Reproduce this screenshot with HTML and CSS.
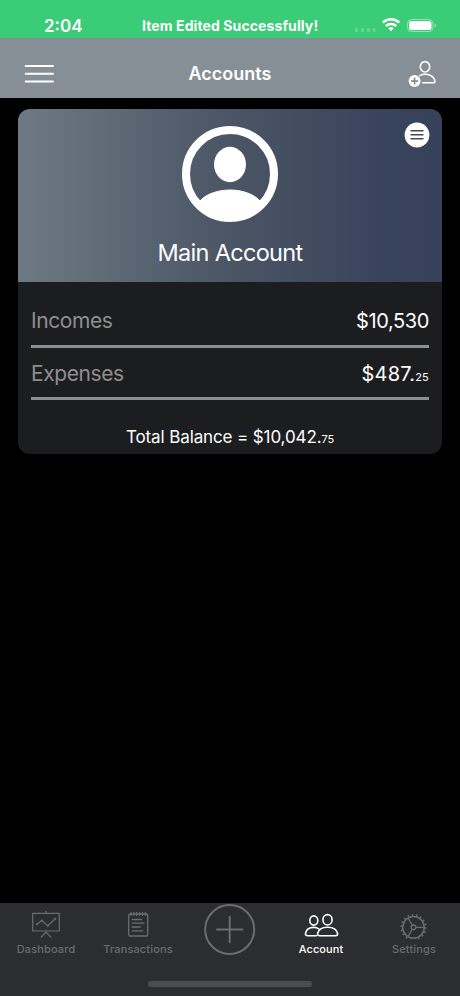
FILE: index.html
```html
<!DOCTYPE html>
<html lang="en">
<head>
  <meta charset="UTF-8">
  <meta name="viewport" content="width=device-width, initial-scale=1">
  <title>Accounts</title>
  <link rel="stylesheet" href="styles.css">
</head>
<body>

  <div class="status-bar">
    <span class="time">2:04</span>
    <span class="message">Item Edited Successfully!</span>
    <svg class="status-icons" width="84" height="18" viewBox="0 0 84 18">
      <g fill="#fff" opacity=".22">
        <rect x="1" y="12" width="3" height="4" rx="1"/>
        <rect x="7" y="12" width="3" height="4" rx="1"/>
        <rect x="13" y="12" width="3" height="4" rx="1"/>
        <rect x="18.500" y="12" width="3" height="4" rx="1"/>
      </g>
      <g fill="none" stroke="#fff" stroke-width="2.500">
        <path d="M28.800 6.600a12 12 0 0 1 16.400 0"/>
        <path d="M31.800 10a7.500 7.500 0 0 1 10.400 0"/>
      </g>
      <path d="M34.200 12.200a4.200 4.200 0 0 1 5.600 0L37 15.200z" fill="#fff"/>
      <rect x="53.500" y="3.500" width="25.500" height="12" rx="4" fill="none" stroke="#fff" opacity=".45"/>
      <rect x="55" y="5" width="22.500" height="9" rx="2.500" fill="#fff"/>
      <path d="M80.500 7.500c1.800.8 1.800 3.200 0 4z" fill="#fff" opacity=".5"/>
    </svg>
  </div>

  <header class="navbar">
    <svg class="menu" width="30" height="20" viewBox="0 0 30 20">
      <path d="M1.700 2h27.300M1.700 9.700h27.300M1.700 17.400h27.300" stroke="#fff" stroke-width="2" stroke-linecap="round"/>
    </svg>
    <h1>Accounts</h1>
    <svg class="add-user" width="28" height="28" viewBox="0 0 28 28">
      <g fill="none" stroke="#fff" stroke-width="1.600">
        <ellipse cx="17" cy="7.800" rx="4.700" ry="5.200"/>
        <path d="M11.800 16.600c3.300-2 8.500-1.900 11.600.3 2.200 1.500 3.300 3.300 3.500 5.400q.1 1.500-1.400 1.500H14.600" stroke-linecap="round" stroke-linejoin="round"/>
      </g>
      <circle cx="6.600" cy="22" r="6" fill="#fff"/>
      <path d="M6.600 18.400v7.200M3 22h7.200" stroke="#7b838b" stroke-width="1.500"/>
    </svg>
  </header>

  <main>
    <section class="card">
      <div class="card-top">
        <svg class="avatar" width="96" height="96" viewBox="0 0 96 96">
          <circle cx="48" cy="48" r="44" fill="none" stroke="#fff" stroke-width="8"/>
          <ellipse cx="48" cy="38.500" rx="16" ry="17.700" fill="#fff"/>
          <path d="M18 75C24 68 36 64 48 64S72 68 78 75A43 43 0 0 1 18 75z" fill="#fff" stroke="#fff"/>
          <path d="M17 76A42 42 0 0 0 79 76z" fill="#fff"/>
        </svg>
        <h2>Main Account</h2>
        <svg class="card-menu" width="26" height="26" viewBox="0 0 26 26">
          <circle cx="13" cy="13" r="12.400" fill="#fff"/>
          <path d="M6.500 8.800h13M6.500 12.800h13M6.500 16.800h13" stroke="#4a4a4a" stroke-width="1.500"/>
        </svg>
      </div>
      <div class="card-body">
        <div class="row">
          <span class="label">Incomes</span>
          <span class="amount">$10,530</span>
        </div>
        <div class="row">
          <span class="label">Expenses</span>
          <span class="amount spaced">$487.<small>25</small></span>
        </div>
        <p class="total">Total Balance = $10,042.<small>75</small></p>
      </div>
    </section>
  </main>

  <nav class="tabs">
    <a class="tab">
      <svg width="30" height="30" viewBox="0 0 30 30">
        <g fill="none" stroke="currentColor" stroke-width="1.200">
          <path d="M1.700 4.300h26.600v17.700H1.700zM15 2v2.300M15 22v2.500M9.700 28.500l5.300-5.500 5.300 5.500"/>
          <path d="M5.500 15.500l5.300-4 6 5.300 7.700-7.300"/>
        </g>
        <g fill="currentColor">
          <circle cx="5.800" cy="15.300" r="1"/><circle cx="10.800" cy="11.500" r="1"/>
          <circle cx="16.800" cy="16.700" r="1"/><circle cx="24.300" cy="9.700" r="1"/>
        </g>
      </svg>
      <span>Dashboard</span>
    </a>
    <a class="tab">
      <svg width="30" height="30" viewBox="0 0 30 30">
        <g fill="none" stroke="currentColor" stroke-width="1.300">
          <rect x="5.700" y="5" width="19" height="22" rx="1.200"/>
          <path d="M9.300 10.500h9M9.300 14.200h11.500M9.300 18h8M9.300 21.800h10.500" stroke-linecap="round"/>
          <path d="M7.900 3v4M10.800 3v4M13.700 3v4M16.600 3v4M19.500 3v4M22.400 3v4" stroke-width="1.100"/>
        </g>
      </svg>
      <span>Transactions</span>
    </a>
    <a class="tab add">
      <svg width="52" height="52" viewBox="0 0 52 52">
        <g fill="none" stroke="currentColor" stroke-width="2">
          <circle cx="25.700" cy="25.500" r="24.500"/>
          <path d="M25.700 12v27M12.200 25.500h27"/>
        </g>
      </svg>
    </a>
    <a class="tab active">
      <svg width="36" height="30" viewBox="0 0 36 30">
        <g fill="none" stroke="currentColor" stroke-width="1.600" stroke-linecap="round" stroke-linejoin="round">
          <ellipse cx="9.800" cy="11.500" rx="4" ry="4.600"/>
          <ellipse cx="23.500" cy="10.800" rx="4.600" ry="5.200"/>
          <path d="M12.500 26.700H3.800c-1.700 0-2.600-.6-2.300-2.200.7-3.900 4-6.100 8.300-6.100 2.200 0 3.800.5 5.100 1.600"/>
          <path d="M15.700 26.700h15.800c1.600 0 2.400-.8 2.100-2.200-.9-4-5-6.200-10-6.200s-9.200 2.200-10 6.200c-.3 1.400.5 2.200 2.100 2.200z"/>
        </g>
      </svg>
      <span>Account</span>
    </a>
    <a class="tab">
      <svg width="30" height="30" viewBox="0 0 30 30">
        <g fill="none" stroke="currentColor" stroke-width="1.300">
          <circle cx="14.500" cy="18.300" r="10.800" stroke-width="1.500"/>
          <circle cx="14.500" cy="18.300" r="12.200" stroke-width="2" stroke-dasharray="1.500 2.758"/>
          <circle cx="14.500" cy="18.300" r="2.300"/>
          <path d="M16.800 18.300h8.500M13.300 16.300L9.100 9M13.300 20.300l-4.200 7.300"/>
        </g>
      </svg>
      <span>Settings</span>
    </a>
    <div class="home-indicator"></div>
  </nav>

</body>
</html>
```

FILE: styles.css
```css
* {
  box-sizing: border-box;
}

body {
  margin: 0;
  height: 996px;
  display: flex;
  flex-direction: column;
  background: #000;
  color: #fff;
  font-family: Inter, "Liberation Sans", sans-serif;
  overflow: hidden;
}

h1, h2, p {
  margin: 0;
}

svg {
  display: block;
  flex-shrink: 0;
}

.status-bar {
  height: 38px;
  padding: 14px 22.5px 0 44px;
  display: grid;
  grid-template-columns: 98px 1fr 84px;
  background: #3acc76;
}

.time {
  font-size: 17px;
  font-weight: 600;
  line-height: 24px;
}

.message {
  font-size: 14px;
  font-weight: 700;
  line-height: 24px;
  letter-spacing: .1px;
  white-space: nowrap;
}

.status-icons {
  margin-top: 2px;
}

.navbar {
  height: 60px;
  padding: 11px 24px 0;
  display: grid;
  grid-template-columns: 30px 1fr 30px;
  align-items: center;
  background: #868e96;
}

.navbar h1 {
  font-size: 18px;
  font-weight: 600;
  text-align: center;
}

.add-user {
  justify-self: end;
  margin-bottom: 1px;
}

main {
  flex: 1;
  padding: 11px 18px;
}

.card {
  height: 344.5px;
  border-radius: 12px;
  background: #1c1d1f;
  overflow: hidden;
}

.card-top {
  position: relative;
  height: 173px;
  padding-top: 17px;
  display: flex;
  flex-direction: column;
  align-items: center;
  background: linear-gradient(90deg, #6d7a84 0%, #4b5565 50%, #38435c 88%, #374159 100%);
}

.card-top h2 {
  margin-top: 16px;
  font-size: 23.5px;
  font-weight: 400;
  line-height: 30px;
  letter-spacing: -.7px;
}

.card-menu {
  position: absolute;
  top: 12.5px;
  right: 12.5px;
}

.card-body {
  padding: 10px 13px 0;
}

.row {
  height: 52px;
  padding-top: 11px;
  display: flex;
  justify-content: space-between;
  border-bottom: 3px solid #8e8e90;
  line-height: 30px;
}

.row:first-child {
  height: 56px;
  padding-top: 14px;
}

.label {
  font-size: 21px;
  letter-spacing: -.4px;
  color: #8e8e90;
}

.amount {
  font-size: 20px;
  letter-spacing: -.4px;
}

.spaced {
  letter-spacing: .2px;
}

small {
  font-size: 11px;
}

.total {
  margin-top: 25px;
  font-size: 17px;
  line-height: 24px;
  letter-spacing: -.12px;
  text-align: center;
}

.tabs {
  height: 93px;
  display: grid;
  grid-template-columns: repeat(5, 1fr);
  grid-template-rows: 78px 6px;
  background: #2c2d2f;
}

.tab {
  padding-top: 6px;
  display: flex;
  flex-direction: column;
  align-items: center;
  color: #6b6c6e;
  font-size: 11px;
  font-weight: 500;
  letter-spacing: .15px;
}

.tab span {
  margin-top: 3px;
  line-height: 15px;
}

.tabs .add {
  padding-top: 1px;
}

.active {
  color: #fff;
}

.active span {
  margin-right: 2px;
  letter-spacing: .05px;
}

.home-indicator {
  grid-column: 1 / -1;
  justify-self: center;
  width: 164px;
  height: 6px;
  border-radius: 3px;
  background: #4b4c4e;
}
```
